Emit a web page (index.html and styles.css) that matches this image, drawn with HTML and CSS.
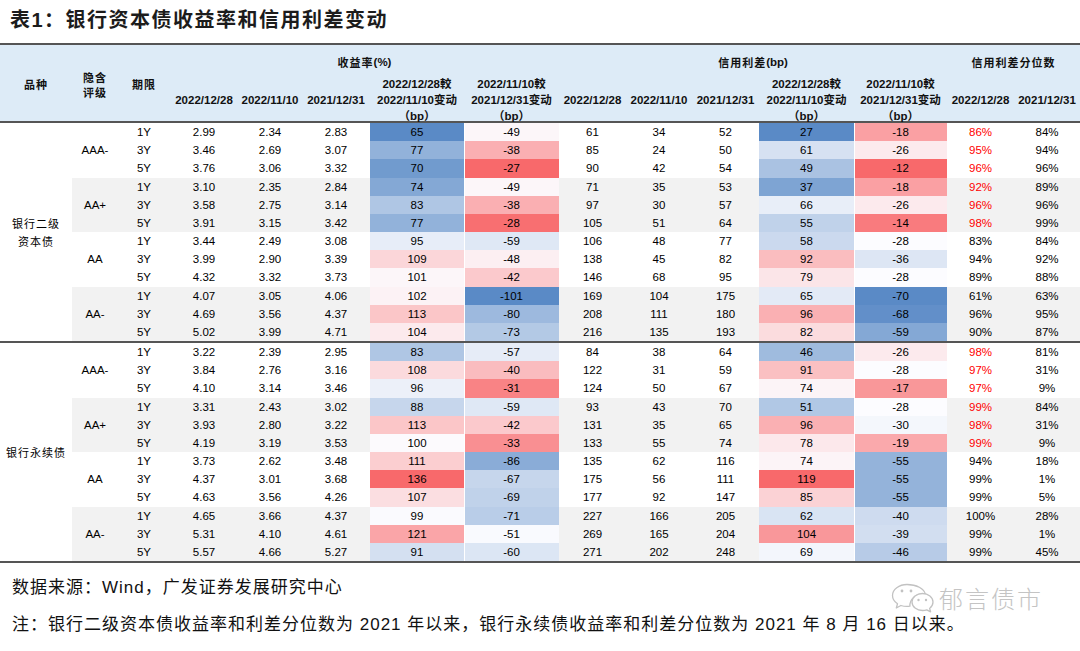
FILE: index.html
```html
<!DOCTYPE html>
<html lang="zh-CN">
<head>
<meta charset="utf-8">
<title>表1</title>
<link rel="stylesheet" href="styles.css">
</head>
<body>
<div class="title">表1：银行资本债收益率和信用利差变动</div>

<div class="thead">
  <div class="hs c1"><span class="cjk">品种</span></div>
  <div class="hs c2"><span class="cjk">隐含<br>评级</span></div>
  <div class="hs c3"><span class="cjk">期限</span></div>
  <div class="hg g1"><span class="cjk">收益率</span>(%)</div>
  <div class="hg g2"><span class="cjk">信用利差</span>(bp)</div>
  <div class="hg g3"><span class="cjk">信用利差分位数</span></div>
  <div class="hsub">2022/12/28</div>
  <div class="hsub">2022/11/10</div>
  <div class="hsub">2021/12/31</div>
  <div class="hsub">2022/12/28較<br>2022/11/10变动<br>（bp）</div>
  <div class="hsub">2022/11/10較<br>2021/12/31变动<br>（bp）</div>
  <div class="hsub">2022/12/28</div>
  <div class="hsub">2022/11/10</div>
  <div class="hsub">2021/12/31</div>
  <div class="hsub">2022/12/28較<br>2022/11/10变动<br>（bp）</div>
  <div class="hsub">2022/11/10較<br>2021/12/31变动<br>（bp）</div>
  <div class="hsub">2022/12/28</div>
  <div class="hsub">2021/12/31</div>
</div>

<div class="group">
  <div class="variety">银行二级<br>资本债</div>
  <div class="subs">
    <div class="sub">
      <div class="rating">AAA-</div>
      <div class="rows">
        <div class="row"><span>1Y</span><span>2.99</span><span>2.34</span><span>2.83</span><span class="hm" style="background:#5a8ac6">65</span><span class="hm sep" style="background:#fcf6f9">-49</span><span>61</span><span>34</span><span>52</span><span class="hm" style="background:#5a8ac6">27</span><span class="hm sep" style="background:#faa0a3">-18</span><span class="hi">86%</span><span>84%</span></div>
        <div class="row"><span>3Y</span><span>3.46</span><span>2.69</span><span>3.07</span><span class="hm" style="background:#92b2da">77</span><span class="hm sep" style="background:#faafb2">-38</span><span>85</span><span>24</span><span>50</span><span class="hm" style="background:#d6e1f2">61</span><span class="hm sep" style="background:#fceaed">-26</span><span class="hi">95%</span><span>94%</span></div>
        <div class="row"><span>5Y</span><span>3.76</span><span>3.06</span><span>3.32</span><span class="hm" style="background:#719bce">70</span><span class="hm sep" style="background:#f8696b">-27</span><span>90</span><span>42</span><span>54</span><span class="hm" style="background:#aac2e2">49</span><span class="hm sep" style="background:#f8696b">-12</span><span class="hi">96%</span><span>96%</span></div>
      </div>
    </div>
    <div class="sub alt">
      <div class="rating">AA+</div>
      <div class="rows">
        <div class="row"><span>1Y</span><span>3.10</span><span>2.35</span><span>2.84</span><span class="hm" style="background:#84a8d5">74</span><span class="hm sep" style="background:#fcf6f9">-49</span><span>71</span><span>35</span><span>53</span><span class="hm" style="background:#7ea4d3">37</span><span class="hm sep" style="background:#faa0a3">-18</span><span class="hi">92%</span><span>89%</span></div>
        <div class="row"><span>3Y</span><span>3.58</span><span>2.75</span><span>3.14</span><span class="hm" style="background:#afc6e4">83</span><span class="hm sep" style="background:#faafb2">-38</span><span>97</span><span>30</span><span>57</span><span class="hm" style="background:#e8eef8">66</span><span class="hm sep" style="background:#fceaed">-26</span><span class="hi">96%</span><span>96%</span></div>
        <div class="row"><span>5Y</span><span>3.91</span><span>3.15</span><span>3.42</span><span class="hm" style="background:#92b2da">77</span><span class="hm sep" style="background:#f86f71">-28</span><span>105</span><span>51</span><span>64</span><span class="hm" style="background:#c0d2ea">55</span><span class="hm sep" style="background:#f97b7e">-14</span><span class="hi">98%</span><span>99%</span></div>
      </div>
    </div>
    <div class="sub">
      <div class="rating">AA</div>
      <div class="rows">
        <div class="row"><span>1Y</span><span>3.44</span><span>2.49</span><span>3.08</span><span class="hm" style="background:#e7edf8">95</span><span class="hm sep" style="background:#dfe8f5">-59</span><span>106</span><span>48</span><span>77</span><span class="hm" style="background:#cbd9ee">58</span><span class="hm sep" style="background:#fcfcff">-28</span><span>83%</span><span>84%</span></div>
        <div class="row"><span>3Y</span><span>3.99</span><span>2.90</span><span>3.39</span><span class="hm" style="background:#fbd6d9">109</span><span class="hm sep" style="background:#fceff2">-48</span><span>138</span><span>45</span><span>82</span><span class="hm" style="background:#fabdbf">92</span><span class="hm sep" style="background:#dde6f4">-36</span><span>94%</span><span>92%</span></div>
        <div class="row"><span>5Y</span><span>4.32</span><span>3.32</span><span>3.73</span><span class="hm" style="background:#fcf6f9">101</span><span class="hm sep" style="background:#fbc9cc">-42</span><span>146</span><span>68</span><span>95</span><span class="hm" style="background:#fbe5e8">79</span><span class="hm sep" style="background:#fcfcff">-28</span><span>89%</span><span>88%</span></div>
      </div>
    </div>
    <div class="sub alt">
      <div class="rating">AA-</div>
      <div class="rows">
        <div class="row"><span>1Y</span><span>4.07</span><span>3.05</span><span>4.06</span><span class="hm" style="background:#fcf2f5">102</span><span class="hm sep" style="background:#5a8ac6">-101</span><span>169</span><span>104</span><span>175</span><span class="hm" style="background:#e3eaf6">65</span><span class="hm sep" style="background:#5a8ac6">-70</span><span>61%</span><span>63%</span></div>
        <div class="row"><span>3Y</span><span>4.69</span><span>3.56</span><span>4.37</span><span class="hm" style="background:#fbc6c8">113</span><span class="hm sep" style="background:#9db9de">-80</span><span>208</span><span>111</span><span>180</span><span class="hm" style="background:#fab0b3">96</span><span class="hm sep" style="background:#628fc9">-68</span><span>96%</span><span>95%</span></div>
        <div class="row"><span>5Y</span><span>5.02</span><span>3.99</span><span>4.71</span><span class="hm" style="background:#fceaed">104</span><span class="hm sep" style="background:#b3c9e5">-73</span><span>216</span><span>135</span><span>193</span><span class="hm" style="background:#fbdcde">82</span><span class="hm sep" style="background:#84a8d5">-59</span><span>90%</span><span>87%</span></div>
      </div>
    </div>
  </div>
</div>

<div class="group">
  <div class="variety">银行永续债</div>
  <div class="subs">
    <div class="sub">
      <div class="rating">AAA-</div>
      <div class="rows">
        <div class="row"><span>1Y</span><span>3.22</span><span>2.39</span><span>2.95</span><span class="hm" style="background:#afc6e4">83</span><span class="hm sep" style="background:#e6ecf7">-57</span><span>84</span><span>38</span><span>64</span><span class="hm" style="background:#9fbbde">46</span><span class="hm sep" style="background:#fceaed">-26</span><span class="hi">98%</span><span>81%</span></div>
        <div class="row"><span>3Y</span><span>3.84</span><span>2.76</span><span>3.16</span><span class="hm" style="background:#fbdadd">108</span><span class="hm sep" style="background:#fabcbf">-40</span><span>122</span><span>31</span><span>59</span><span class="hm" style="background:#fac0c2">91</span><span class="hm sep" style="background:#fcfcff">-28</span><span class="hi">97%</span><span>31%</span></div>
        <div class="row"><span>5Y</span><span>4.10</span><span>3.14</span><span>3.46</span><span class="hm" style="background:#ecf0f9">96</span><span class="hm sep" style="background:#f98385">-31</span><span>124</span><span>50</span><span>67</span><span class="hm" style="background:#fcf4f7">74</span><span class="hm sep" style="background:#f99799">-17</span><span class="hi">97%</span><span>9%</span></div>
      </div>
    </div>
    <div class="sub alt">
      <div class="rating">AA+</div>
      <div class="rows">
        <div class="row"><span>1Y</span><span>3.31</span><span>2.43</span><span>3.02</span><span class="hm" style="background:#c6d6ec">88</span><span class="hm sep" style="background:#dfe8f5">-59</span><span>93</span><span>43</span><span>70</span><span class="hm" style="background:#b1c8e5">51</span><span class="hm sep" style="background:#fcfcff">-28</span><span class="hi">99%</span><span>84%</span></div>
        <div class="row"><span>3Y</span><span>3.93</span><span>2.80</span><span>3.22</span><span class="hm" style="background:#fbc6c8">113</span><span class="hm sep" style="background:#fbc9cc">-42</span><span>131</span><span>35</span><span>65</span><span class="hm" style="background:#fab0b3">96</span><span class="hm sep" style="background:#f4f7fc">-30</span><span class="hi">98%</span><span>31%</span></div>
        <div class="row"><span>5Y</span><span>4.19</span><span>3.19</span><span>3.53</span><span class="hm" style="background:#fcfafd">100</span><span class="hm sep" style="background:#f98f92">-33</span><span>133</span><span>55</span><span>74</span><span class="hm" style="background:#fce8eb">78</span><span class="hm sep" style="background:#faa9ac">-19</span><span class="hi">99%</span><span>9%</span></div>
      </div>
    </div>
    <div class="sub">
      <div class="rating">AA</div>
      <div class="rows">
        <div class="row"><span>1Y</span><span>3.73</span><span>2.62</span><span>3.48</span><span class="hm" style="background:#fbced0">111</span><span class="hm sep" style="background:#8aacd7">-86</span><span>135</span><span>62</span><span>116</span><span class="hm" style="background:#fcf4f7">74</span><span class="hm sep" style="background:#94b3da">-55</span><span>94%</span><span>18%</span></div>
        <div class="row"><span>3Y</span><span>4.37</span><span>3.01</span><span>3.68</span><span class="hm" style="background:#f8696b">136</span><span class="hm sep" style="background:#c6d6ec">-67</span><span>175</span><span>56</span><span>111</span><span class="hm" style="background:#f8696b">119</span><span class="hm sep" style="background:#94b3da">-55</span><span>99%</span><span>1%</span></div>
        <div class="row"><span>5Y</span><span>4.63</span><span>3.56</span><span>4.26</span><span class="hm" style="background:#fbdee1">107</span><span class="hm sep" style="background:#c0d2ea">-69</span><span>177</span><span>92</span><span>147</span><span class="hm" style="background:#fbd2d5">85</span><span class="hm sep" style="background:#94b3da">-55</span><span>99%</span><span>5%</span></div>
      </div>
    </div>
    <div class="sub alt">
      <div class="rating">AA-</div>
      <div class="rows">
        <div class="row"><span>1Y</span><span>4.65</span><span>3.66</span><span>4.37</span><span class="hm" style="background:#fafafe">99</span><span class="hm sep" style="background:#b9cde8">-71</span><span>227</span><span>166</span><span>205</span><span class="hm" style="background:#d9e4f3">62</span><span class="hm sep" style="background:#cedbef">-40</span><span>100%</span><span>28%</span></div>
        <div class="row"><span>3Y</span><span>5.31</span><span>4.10</span><span>4.61</span><span class="hm" style="background:#faa5a8">121</span><span class="hm sep" style="background:#f9fafe">-51</span><span>269</span><span>165</span><span>204</span><span class="hm" style="background:#f9979a">104</span><span class="hm sep" style="background:#d2def0">-39</span><span>99%</span><span>1%</span></div>
        <div class="row"><span>5Y</span><span>5.57</span><span>4.66</span><span>5.27</span><span class="hm" style="background:#d4e0f1">91</span><span class="hm sep" style="background:#dce6f4">-60</span><span>271</span><span>202</span><span>248</span><span class="hm" style="background:#f3f6fc">69</span><span class="hm sep" style="background:#b7cbe7">-46</span><span>99%</span><span>45%</span></div>
      </div>
    </div>
  </div>
</div>

<div class="notes">
  <p>数据来源：Wind，广发证券发展研究中心</p>
  <p>注：银行二级资本债收益率和利差分位数为 2021 年以来，银行永续债收益率和利差分位数为 2021 年 8 月 16 日以来。</p>
</div>

<div class="watermark">
  <svg class="wx" width="44" height="30" viewBox="0 0 44 30" aria-hidden="true">
    <g fill="#fff" stroke="#c2c2c2" stroke-width="1.3" stroke-linejoin="round">
      <path d="M16 1.5C8 1.5 1.5 6.5 1.5 12.5c0 3.4 2 6.3 5 8.3L5.3 25l4.6-2.5c1.9.6 3.9.9 6.1.9 1 0 2-.1 2.9-.2C18.6 16.5 24.5 11 32 11c.8 0 1.6.1 2.3.2C33.2 5.7 25.5 1.5 16 1.5z"/>
      <path d="M42 19c0-4.8-4.7-8.5-10.5-8.5S21 14.2 21 19s4.7 8.5 10.5 8.5c1.5 0 3-.2 4.3-.7l3.8 2-1-3.4C40.7 23.8 42 21.5 42 19z"/>
    </g>
    <g fill="#c2c2c2">
      <circle cx="11" cy="8" r="1.4"/><circle cx="20" cy="8" r="1.4"/>
      <circle cx="27.5" cy="17" r="1.2"/><circle cx="35" cy="17" r="1.2"/>
    </g>
  </svg>
  <span class="wm-text">郁言债市</span>
</div>
</body>
</html>
```

FILE: styles.css
```css
* {
  box-sizing: border-box;
  margin: 0;
  padding: 0;
}

body {
  width: 1080px;
  height: 651px;
  overflow: hidden;
  position: relative;
  background: #fff;
  color: #000;
  font-family: "Liberation Sans", "Noto Sans CJK SC", sans-serif;
}

.title {
  height: 43px;
  padding: 6px 0 0 10px;
  font-size: 20px;
  line-height: 28px;
  font-weight: bold;
  letter-spacing: 1.5px;
  color: #1c1c1c;
}

/* ---------- header ---------- */
.thead {
  height: 80px;
  background: #ddebf7;
  border-top: 2px solid #555;
  border-bottom: 2px solid #555;
  display: grid;
  grid-template-columns: 72px 46px 52px 68px 64px 68px 94px 95px 67px 66px 67px 95px 93px 67px 66px;
  grid-template-rows: 32px 44px;
  font-size: 11.5px;
  font-weight: bold;
  color: #111;
}

.thead .cjk {
  font-family: "Noto Sans CJK SC", sans-serif;
  font-size: 11px;
  letter-spacing: 1px;
}

.hs {
  grid-row: 1 / 3;
  display: flex;
  align-items: center;
  justify-content: center;
  text-align: center;
  line-height: 15px;
  padding-top: 3px;
}

.c1 { grid-column: 1; }
.c2 { grid-column: 2; }
.c3 { grid-column: 3; }

.hg {
  grid-row: 1;
  display: flex;
  align-items: center;
  justify-content: center;
  padding-top: 2px;
}

.g1 { grid-column: 4 / 9; }
.g2 { grid-column: 9 / 14; }
.g3 { grid-column: 14 / 16; }

.hsub {
  grid-row: 2;
  display: flex;
  align-items: center;
  justify-content: center;
  text-align: center;
  line-height: 16px;
  white-space: nowrap;
  padding-top: 1px;
}

/* ---------- body ---------- */
.group {
  display: flex;
  height: 220px;
  border-bottom: 2px solid #555;
}

.variety {
  width: 72px;
  display: flex;
  align-items: center;
  justify-content: center;
  text-align: center;
  font-family: "Noto Sans CJK SC", sans-serif;
  font-size: 11px;
  line-height: 18px;
  letter-spacing: 1px;
}

.subs {
  flex: 1;
  display: flex;
  flex-direction: column;
}

.sub {
  flex: 1;
  display: flex;
}

.sub.alt {
  background: #f2f2f2;
}

.rating {
  width: 46px;
  display: flex;
  align-items: center;
  justify-content: center;
  font-size: 11.5px;
}

.rows {
  flex: 1;
  display: flex;
  flex-direction: column;
}

.row {
  flex: 1;
  display: grid;
  grid-template-columns: 52px 68px 64px 68px 94px 95px 67px 66px 67px 95px 93px 67px 66px;
  font-size: 11.5px;
}

.row span {
  display: flex;
  align-items: center;
  justify-content: center;
}

.row .sep {
  box-shadow: inset 1px 0 0 #fff;
}

.row .hi {
  color: #ff0000;
}

/* ---------- notes ---------- */
.notes {
  padding: 6px 0 0 12px;
  font-size: 17px;
  line-height: 37px;
  letter-spacing: 1px;
  color: #111;
}

/* ---------- watermark ---------- */
.watermark {
  position: absolute;
  left: 891px;
  top: 583px;
  display: flex;
  align-items: center;
  gap: 4px;
}

.wm-text {
  font-family: "Noto Sans CJK SC", sans-serif;
  font-size: 24px;
  font-weight: 300;
  letter-spacing: 2px;
  color: #c4c4c4;
  line-height: 30px;
}
```
